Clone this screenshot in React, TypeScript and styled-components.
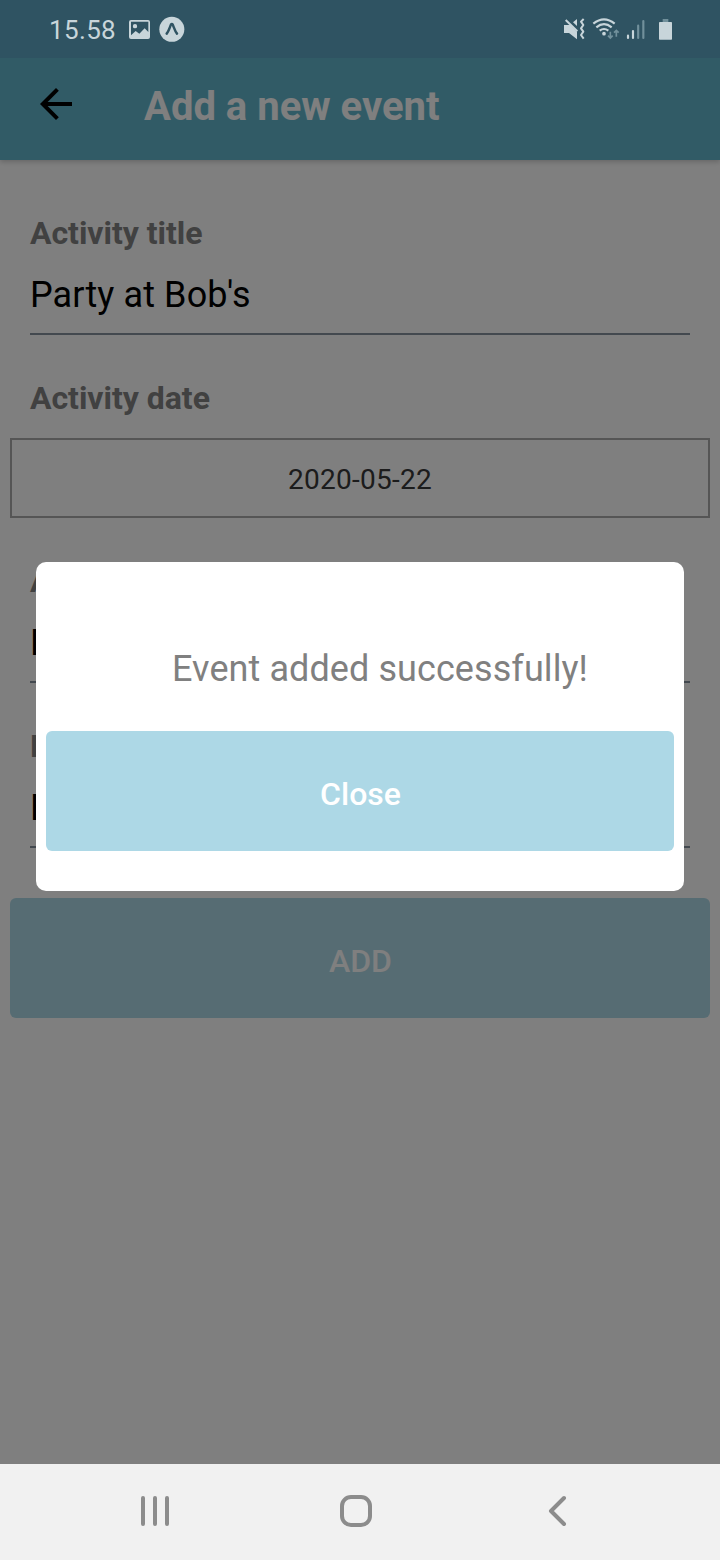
import React from "react";
import styled, { createGlobalStyle } from "styled-components";

const GlobalStyle = createGlobalStyle`
  *, *::before, *::after { box-sizing: border-box; }
  body { margin: 0; background: #fff; font-family: Roboto, "Liberation Sans", sans-serif; }
  button { font-family: inherit; border: 0; padding: 0; }
`;

const Phone = styled.div`
  width: 720px;
  height: 1560px;
  display: flex;
  flex-direction: column;
  overflow: hidden;
`;

const Screen = styled.div`
  position: relative;
  height: 1464px;
  display: flex;
  flex-direction: column;
  background: #fff;
`;

const StatusBar = styled.div`
  position: relative;
  z-index: 2;
  height: 58px;
  flex: none;
  display: flex;
  align-items: flex-start;
  justify-content: space-between;
  padding: 16px 47px 0 49px;
  background: #2f5362;
  color: #c8d5da;
`;

const StatusGroup = styled.div`
  display: flex;
  align-items: flex-start;
`;

const Clock = styled.span`
  width: 80px;
  font-size: 26px;
  line-height: 28px;
  letter-spacing: 0.35px;
`;

const StatusIcon = styled.svg<{ $gap?: number }>`
  display: block;
  flex: none;
  height: 27px;
  margin-left: ${(p) => p.$gap ?? 0}px;
`;

const Header = styled.header`
  height: 102px;
  flex: none;
  display: flex;
  align-items: center;
  padding: 0 40px;
  background: #62b6cd;
  box-shadow: 0 2px 5px rgba(0, 0, 0, 0.2);
`;

const BackIcon = styled.svg`
  width: 32px;
  height: 32px;
  margin: -10px 72px 0 0;
`;

const Title = styled.h1`
  margin: -5px 0 0;
  color: #fff;
  font-size: 40px;
  line-height: 47px;
  font-weight: 700;
`;

const Form = styled.main`
  display: flex;
  flex-direction: column;
  padding: 54px 10px 0;
`;

const Field = styled.div`
  display: flex;
  flex-direction: column;
  margin: 0 20px 44px;
`;

const Label = styled.label`
  height: 38px;
  color: #828282;
  font-size: 32px;
  line-height: 38px;
  font-weight: 700;
  letter-spacing: -0.03px;
`;

const Value = styled.div`
  height: 83px;
  border-bottom: 2px solid #86939e;
  color: #000;
  font-size: 36px;
  line-height: 86px;
  letter-spacing: 0.1px;
`;

const DateField = styled(Field)`
  margin: 0 0 44px;

  ${Label} {
    margin: 0 20px 21px;
  }
`;

const DateBox = styled.div`
  height: 80px;
  display: flex;
  align-items: center;
  justify-content: center;
  border: 2px solid #aaa;
  color: #383838;
  font-size: 28px;
  letter-spacing: 0.25px;
  padding-top: 2px;
`;

const Button = styled.button`
  display: flex;
  align-items: center;
  justify-content: center;
  width: 100%;
  height: 120px;
  padding: 5px 0 0 1px;
  border-radius: 6px;
  background: #add8e6;
  color: #fff;
  font-size: 32px;
  font-weight: 500;
`;

const AddButton = styled(Button)`
  margin-top: 6px;
`;

const Scrim = styled.div`
  position: absolute;
  inset: 0;
  z-index: 1;
  display: flex;
  align-items: flex-start;
  justify-content: center;
  padding-top: 562px;
  background: rgba(0, 0, 0, 0.5);
`;

const Dialog = styled.div`
  width: 648px;
  height: 329px;
  display: flex;
  flex-direction: column;
  justify-content: flex-end;
  padding: 0 10px 40px;
  border-radius: 10px;
  background: #fff;
`;

const Message = styled.p`
  margin: 0 0 40px;
  padding-left: 40px;
  color: #808080;
  font-size: 36px;
  line-height: 43px;
  letter-spacing: 0.08px;
  text-align: center;
`;

const NavBar = styled.nav`
  height: 96px;
  display: flex;
  align-items: center;
  padding: 0 0 2px 141px;
  background: #f1f1f1;
  color: #8c8c8c;
`;

const NavIcon = styled.svg<{ $gap?: number }>`
  display: block;
  height: 32px;
  margin-left: ${(p) => p.$gap ?? 0}px;
  fill: none;
  stroke: currentColor;
  stroke-width: 4;
  stroke-linecap: round;
  stroke-linejoin: round;
`;

export default function App() {
  return (
    <Phone>
      <GlobalStyle />
      <Screen>
        <StatusBar>
          <StatusGroup>
            <Clock>15.58</Clock>
            <StatusIcon width="21" viewBox="297 48 63 81" fill="currentColor">
              <path
                fillRule="evenodd"
                d="M303 60H354Q360 60 360 66V111Q360 117 354 117H303Q297 117 297 111V66Q297 60 303 60ZM303 65V106L317 93L328 101L344 85L355 96V65ZM315 72A6.5 6.5 0 1 1 315 85A6.5 6.5 0 1 1 315 72Z"
              />
            </StatusIcon>
            <StatusIcon $gap={9} width="26" viewBox="389 48 78 81">
              <circle cx="427.5" cy="88" r="37.5" fill="currentColor" />
              <path
                d="M412 101C418 94 422 80 425 73.500Q427.500 70 430 73.500C433 80 437 94 443 101"
                fill="none"
                stroke="#2f5362"
                strokeWidth="7.500"
                strokeLinecap="round"
                strokeLinejoin="round"
              />
            </StatusIcon>
          </StatusGroup>
          <StatusGroup>
            <StatusIcon width="21" viewBox="42 48 63 81">
              <path d="M42 75H60L81 95V118L57 99H42ZM69 67L81 57V78Z" fill="currentColor" />
              <path d="M47 60L82 94" fill="none" stroke="currentColor" strokeWidth="6" />
              <path
                d="M101 57L93 65L100 75L93 85L100 95L93 105L101 116"
                fill="none"
                stroke="currentColor"
                strokeWidth="6"
                strokeLinejoin="round"
              />
            </StatusIcon>
            <StatusIcon $gap={7} width="28" viewBox="126 48 84 81" fill="none" stroke="currentColor">
              <path d="M130 71Q162 45 194 71M139 82Q162 63 185 82M149 92Q162 82 175 92" strokeWidth="6.500" />
              <circle cx="162" cy="101" r="5.500" fill="currentColor" stroke="none" />
              <path
                d="M181 95V114M174 107L181 114L188 107M199 110V91M192 98L199 91L206 98"
                stroke="#71909b"
                strokeWidth="5"
              />
            </StatusIcon>
            <StatusIcon $gap={6} width="20" viewBox="228 48 60 81" fill="none" strokeWidth="6.500" strokeLinecap="round">
              <path d="M234 107V114M249 93V114" stroke="currentColor" />
              <path d="M264.500 77V114M280 63V114" stroke="#71909b" />
            </StatusIcon>
            <StatusIcon $gap={12} width="15" viewBox="324 48 45 81">
              <path d="M338 57H355V66H338Z" fill="#71909b" />
              <rect x="327" y="66" width="39" height="53" rx="2" fill="currentColor" />
            </StatusIcon>
          </StatusGroup>
        </StatusBar>

        <Header>
          <BackIcon viewBox="4 4 16 16" aria-label="Back">
            <path d="M20 11H7.830l5.590-5.590L12 4l-8 8 8 8 1.410-1.410L7.830 13H20v-2z" />
          </BackIcon>
          <Title>Add a new event</Title>
        </Header>

        <Form>
          <Field>
            <Label>Activity title</Label>
            <Value>Party at Bob's</Value>
          </Field>
          <DateField>
            <Label>Activity date</Label>
            <DateBox>2020-05-22</DateBox>
          </DateField>
          <Field>
            <Label>A</Label>
            <Value>P</Value>
          </Field>
          <Field>
            <Label>D</Label>
            <Value>B</Value>
          </Field>
          <AddButton>ADD</AddButton>
        </Form>

        <Scrim>
          <Dialog role="dialog">
            <Message>Event added successfully!</Message>
            <Button>Close</Button>
          </Dialog>
        </Scrim>
      </Screen>

      <NavBar>
        <NavIcon width="28" viewBox="0 0 28 32">
          <path d="M2 3V29M14 3V29M26 3V29" />
        </NavIcon>
        <NavIcon $gap={171} width="32" viewBox="0 0 32 32">
          <rect x="2" y="2" width="28" height="28" rx="9" />
        </NavIcon>
        <NavIcon $gap={176} width="19" viewBox="0 0 19 32">
          <path d="M16 3L3 16L16 29" />
        </NavIcon>
      </NavBar>
    </Phone>
  );
}
